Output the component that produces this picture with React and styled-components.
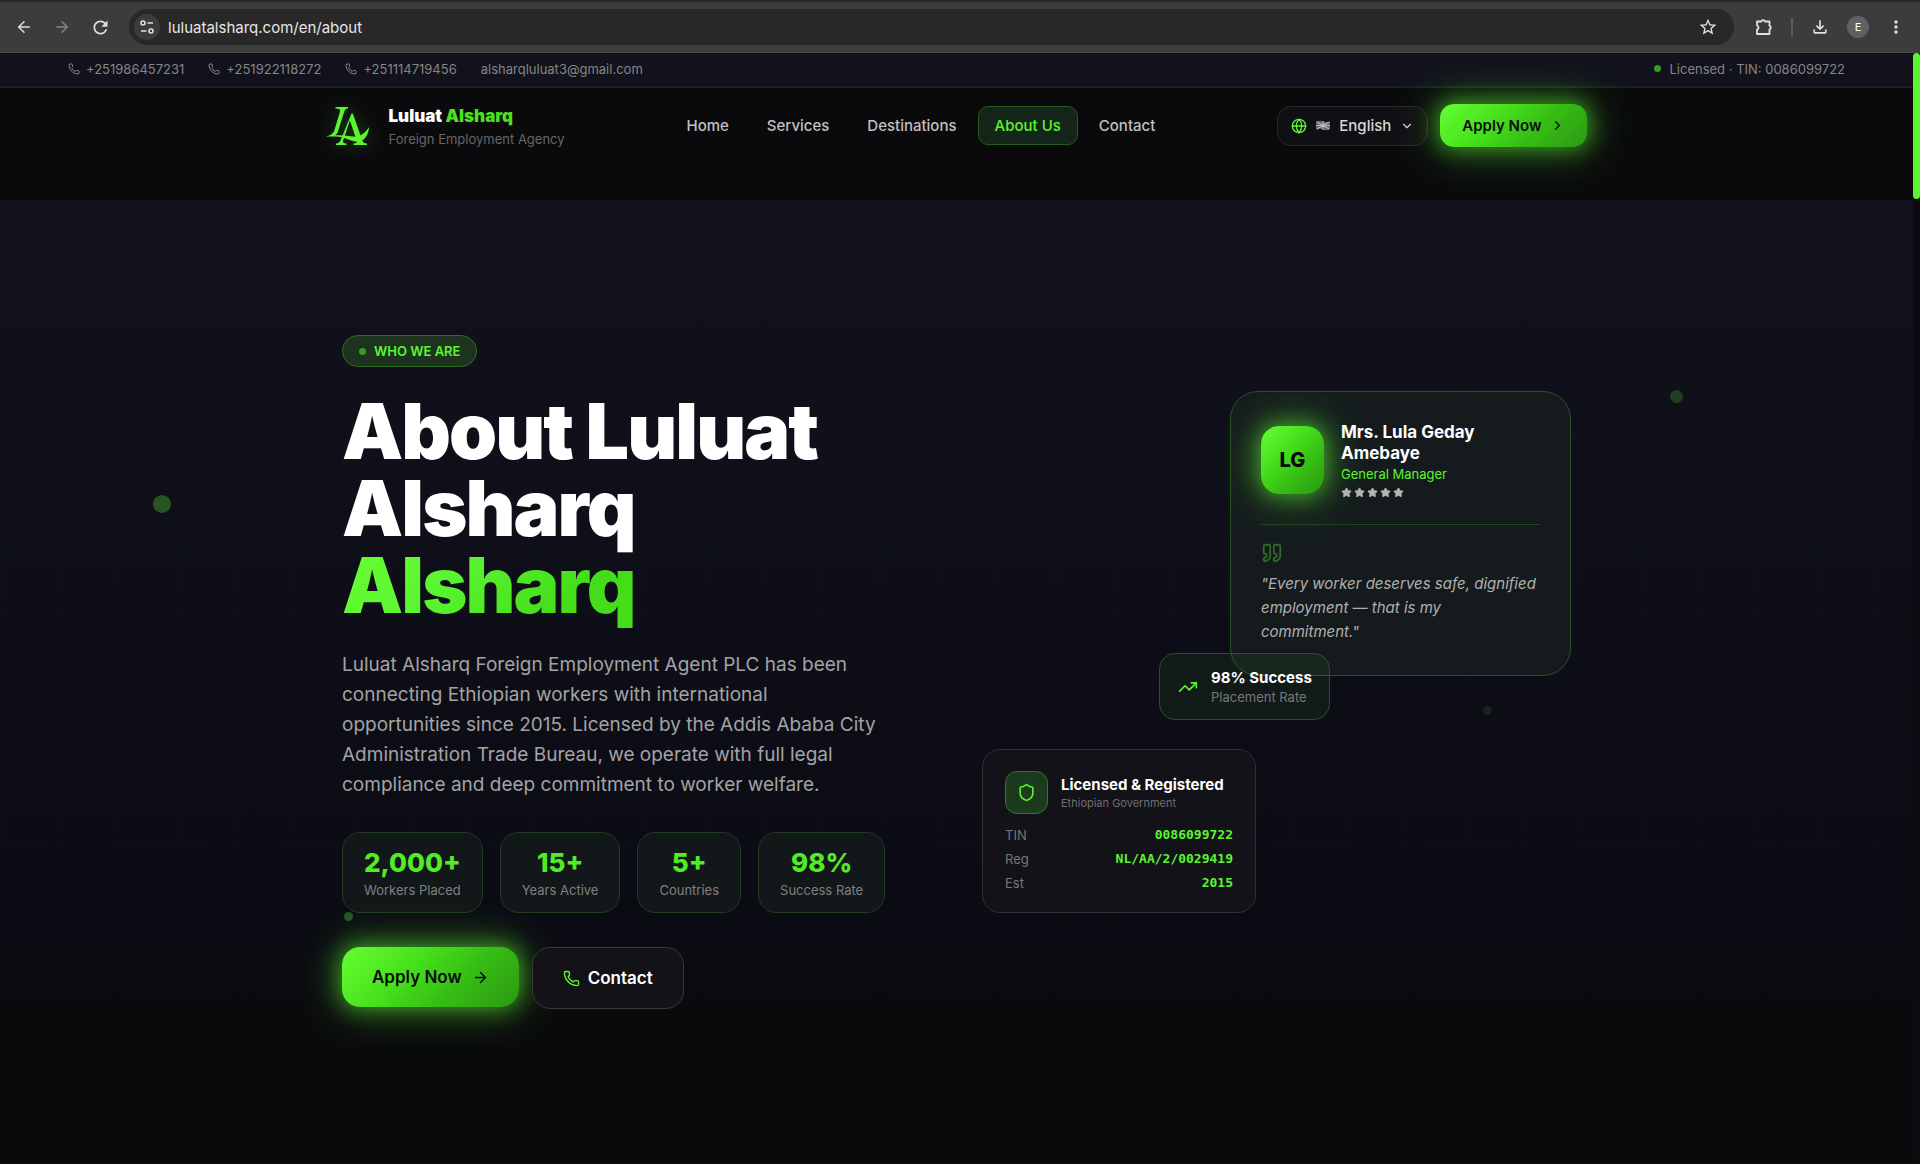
import React from 'react';
import styled, { createGlobalStyle, css } from 'styled-components';
import {
	ArrowLeft,
	ArrowRight,
	ChevronDown,
	ChevronRight,
	Globe,
	Phone,
	Quote,
	Shield,
	Star,
	TrendingUp,
} from 'lucide-react';
import {
	MdMoreVert,
	MdOutlineExtension,
	MdOutlineFileDownload,
	MdRefresh,
	MdStarBorder,
} from 'react-icons/md';

const GREEN = '#5cf531';
const GRADIENT = 'linear-gradient(135deg, #66ff33 0%, #44dd1a 40%, #36bd14 65%, #2c9912 100%)';
const GLOW = '0 0 20px 2px rgba(92, 245, 49, 0.5), 0 0 40px 8px rgba(92, 245, 49, 0.3)';

const phones = ['+251986457231', '+251922118272', '+251114719456'];

const links = [
	{ label: 'Home', href: '/en' },
	{ label: 'Services', href: '/en/services' },
	{ label: 'Destinations', href: '/en/destinations' },
	{ label: 'About Us', href: '/en/about', active: true },
	{ label: 'Contact', href: '/en/contact' },
];

const stats = [
	{ value: '2,000+', label: 'Workers Placed' },
	{ value: '15+', label: 'Years Active' },
	{ value: '5+', label: 'Countries' },
	{ value: '98%', label: 'Success Rate' },
];

const registration = [
	{ label: 'TIN', value: '0086099722' },
	{ label: 'Reg', value: 'NL/AA/2/0029419' },
	{ label: 'Est', value: '2015' },
];

const Browser = () => (
	<Toolbar>
		<ToolButton aria-label="Back"><ArrowLeft size={18} /></ToolButton>
		<ToolButton aria-label="Forward" $dim><ArrowRight size={18} /></ToolButton>
		<ToolButton aria-label="Reload"><MdRefresh size={21} /></ToolButton>
		<AddressBar>
			<SiteInfo aria-label="Site information">
				<svg width="16" height="16" viewBox="0 0 16 16" fill="none" stroke="currentColor" strokeWidth="1.6">
					<circle cx="4" cy="4" r="2" />
					<path d="M8.5 4H14M2 12h5.5" />
					<circle cx="12" cy="12" r="2" />
				</svg>
			</SiteInfo>
			<Address aria-label="Address" defaultValue="luluatalsharq.com/en/about" />
			<ToolButton aria-label="Bookmark"><MdStarBorder size={20} /></ToolButton>
		</AddressBar>
		<ToolGroup>
			<ToolButton aria-label="Extensions">
				<svg width="20" height="20" viewBox="0 0 20 20" fill="none" stroke="currentColor" strokeWidth="1.8" strokeLinejoin="round">
					<path d="M3 4.500h4.300a1.900 1.900 0 0 1 3.600 0h4.600v4.300a1.900 1.900 0 0 1 0 3.600v4.600H3v-4.300a2.200 2.200 0 0 0 0-4.200z" />
				</svg>
			</ToolButton>
			<Separator />
			<ToolButton aria-label="Downloads"><MdOutlineFileDownload size={20} /></ToolButton>
			<Profile aria-label="Profile">E</Profile>
			<ToolButton aria-label="Menu"><MdMoreVert size={20} /></ToolButton>
		</ToolGroup>
	</Toolbar>
);

const Logo = () => (
	<LogoMark viewBox="0 0 44 40" fill={GREEN} aria-hidden="true">
		<path d="M9.5 1H22v1.4c-2.2.3-3.2 1.3-3.7 3.2L12 25.500c-.6 1.900-1.400 2.900-2.800 3.800 6 .1 12.300.3 17.800 1.200 5.900.9 11.400-2.400 16-9.500-.2 6.900-3.600 12.600-8.600 14.200-5.600 1.800-10.900-1.800-16.900-3.400-5.200-1.400-10.200-1.300-17.500-1.100 5-1.600 7.500-3.500 8.500-6.700L14 5.600c.7-2.200-.7-2.900-4.500-3.200z" />
		<path d="M25.500 7.500h1.300l9.500 27c.7 2 2 2.800 4.700 3.100V39H27.500v-1.400c3-.2 3.900-1 3.200-3.100l-6.800-19.900-6.600 19.600c-.8 2.200.2 3.100 3.200 3.400V39H10v-1.400c2.600-.4 3.800-1.300 4.600-3.400z" />
	</LogoMark>
);

const Navigation = () => (
	<Nav>
		<Brand href="/en">
			<Logo />
			<BrandText>
				<BrandName>Luluat <em>Alsharq</em></BrandName>
				<BrandSub>Foreign Employment Agency</BrandSub>
			</BrandText>
		</Brand>
		<NavLinks>
			{links.map(({ label, href, active }) => (
				<NavLink key={label} href={href} $active={active}>{label}</NavLink>
			))}
		</NavLinks>
		<NavActions>
			<Language>
				<Globe size={16} color={GREEN} />
				<svg width="14" height="11" viewBox="0 0 14 11" aria-hidden="true">
					<path fill="#66666a" d="M0 1.500q3.500-1.500 7 0t7 0v8q-3.500 1.500-7 0t-7 0z" />
					<path stroke="#b8b8b8" strokeWidth="1.200" d="M1 2l12 7M13 2l-12 7M7 1v9M0 5.500h14" />
				</svg>
				English
				<ChevronDown size={14} />
			</Language>
			<ApplyLink href="/en/apply">
				Apply Now <ChevronRight size={15} />
			</ApplyLink>
		</NavActions>
	</Nav>
);

const ManagerCard = () => (
	<Manager>
		<ManagerHead>
			<Avatar>LG</Avatar>
			<div>
				<ManagerName>Mrs. Lula Geday Amebaye</ManagerName>
				<Role>General Manager</Role>
				<Stars>
					{[1, 2, 3, 4, 5].map(star => (
						<Star key={star} size={11} fill="currentColor" />
					))}
				</Stars>
			</div>
		</ManagerHead>
		<QuoteIcon size={22} />
		<QuoteText>"Every worker deserves safe, dignified employment — that is my commitment."</QuoteText>
	</Manager>
);

const LicenseCard = () => (
	<License>
		<LicenseHead>
			<ShieldBox><Shield size={19} /></ShieldBox>
			<div>
				<CardTitle>Licensed &amp; Registered</CardTitle>
				<CardNote>Ethiopian Government</CardNote>
			</div>
		</LicenseHead>
		<Registration>
			<tbody>
				{registration.map(({ label, value }) => (
					<tr key={label}>
						<th scope="row">{label}</th>
						<td>{value}</td>
					</tr>
				))}
			</tbody>
		</Registration>
	</License>
);

const App = () => (
	<>
		<GlobalStyle />
		<Browser />
		<Page>
			<TopBar>
				<Contacts>
					{phones.map(phone => (
						<TopLink key={phone} href={`tel:${phone}`}>
							<Phone size={12} /> {phone}
						</TopLink>
					))}
					<TopLink href="mailto:alsharqluluat3@gmail.com">alsharqluluat3@gmail.com</TopLink>
				</Contacts>
				<LicenseNote><Bullet /> Licensed · TIN: 0086099722</LicenseNote>
			</TopBar>
			<Header><Navigation /></Header>
			<Hero>
				<Dot $x="8%" $y="295px" $size={18} />
				<Dot $x="87.3%" $y="190px" $size={13} $dim />
				<Dot $x="77.5%" $y="506px" $size={9} $faint />
				<Dot $x="18%" $y="712px" $size={9} />
				<HeroInner>
					<Intro>
						<Pill><Bullet /> WHO WE ARE</Pill>
						<Title>
							About Luluat Alsharq
							<em>Alsharq</em>
						</Title>
						<Lead>
							Luluat Alsharq Foreign Employment Agent PLC has been connecting
							Ethiopian workers with international opportunities since 2015.
							Licensed by the Addis Ababa City Administration Trade Bureau, we
							operate with full legal compliance and deep commitment to worker
							welfare.
						</Lead>
						<Stats>
							{stats.map(({ value, label }) => (
								<Stat key={label}>
									<strong>{value}</strong>
									<span>{label}</span>
								</Stat>
							))}
						</Stats>
						<Actions>
							<ApplyLink href="/en/apply" $large>
								Apply Now <ArrowRight size={17} />
							</ApplyLink>
							<ContactLink href="/en/contact">
								<Phone size={17} color={GREEN} /> Contact
							</ContactLink>
						</Actions>
					</Intro>
					<Cards>
						<ManagerCard />
						<Success>
							<TrendingUp size={20} color={GREEN} />
							<div>
								<CardTitle>98% Success</CardTitle>
								<SuccessNote>Placement Rate</SuccessNote>
							</div>
						</Success>
						<LicenseCard />
					</Cards>
				</HeroInner>
			</Hero>
			<ScrollTrack><ScrollThumb /></ScrollTrack>
		</Page>
	</>
);

export default App;

const GlobalStyle = createGlobalStyle`
	* {
		box-sizing: border-box;
	}

	body {
		margin: 0;
		background: #0a0a0d;
		color: white;
		font-family: Inter, sans-serif;
	}

	#root {
		min-height: 100vh;
		display: flex;
		flex-direction: column;
	}

	a {
		color: inherit;
		text-decoration: none;
	}

	button {
		border: 0;
		padding: 0;
		color: inherit;
		font-family: inherit;
	}

	em {
		font-style: normal;
	}

	svg {
		flex-shrink: 0;
	}
`;

const Toolbar = styled.div`
	height: 53px;
	display: flex;
	align-items: center;
	gap: 14px;
	padding: 0 12px;
	background: #3c3c3c;
	border-top: 2px solid #1f2b26;
	border-bottom: 1px solid #4a4a4a;
`;

const ToolButton = styled.button`
	width: 24px;
	height: 24px;
	display: flex;
	align-items: center;
	justify-content: center;
	background: none;
	color: ${props => (props.$dim ? '#858585' : '#e0e0e0')};
`;

const AddressBar = styled.div`
	flex: 1;
	height: 36px;
	display: flex;
	align-items: center;
	gap: 8px;
	margin-left: 3px;
	padding: 0 14px 0 5px;
	border-radius: 18px;
	background: #282828;
`;

const SiteInfo = styled.button`
	width: 26px;
	height: 26px;
	display: flex;
	align-items: center;
	justify-content: center;
	border-radius: 13px;
	background: #3c3c3c;
	color: #e0e0e0;
`;

const Address = styled.input`
	flex: 1;
	border: 0;
	outline: none;
	padding: 0;
	background: none;
	color: #e6e6e6;
	font: 400 15px Inter, sans-serif;
`;

const ToolGroup = styled.div`
	display: flex;
	align-items: center;
	gap: 15px;
	margin-left: 4px;
`;

const Separator = styled.span`
	width: 2px;
	height: 18px;
	background: #5c5c5c;
`;

const Profile = styled.button`
	width: 22px;
	height: 22px;
	border-radius: 50%;
	background: #5f6064;
	font-size: 11px;
`;

const Page = styled.div`
	flex: 1;
	position: relative;
	display: flex;
	flex-direction: column;
	padding-right: 7px;
`;

const TopBar = styled.div`
	height: 35px;
	display: flex;
	align-items: center;
	justify-content: space-between;
	padding: 0 68px 2px;
	background: #12121c;
	border-bottom: 2px solid #19231f;
	color: #858585;
	font-size: 13px;
`;

const Contacts = styled.div`
	display: flex;
	gap: 24px;
`;

const TopLink = styled.a`
	display: flex;
	align-items: center;
	gap: 6px;
`;

const LicenseNote = styled.span`
	display: flex;
	align-items: center;
	gap: 8px;
`;

const Bullet = styled.span`
	width: 7px;
	height: 7px;
	border-radius: 50%;
	background: #33a01a;
`;

const Header = styled.header`
	height: 112px;
	padding: 13px 32px 0;
	background: #0a0a0d;
	z-index: 1;
`;

const Nav = styled.nav`
	max-width: 1262px;
	display: flex;
	align-items: center;
	justify-content: space-between;
	margin: 0 auto;
`;

const Brand = styled.a`
	display: flex;
	align-items: center;
	gap: 19px;
`;

const BrandText = styled.span`
	padding-top: 3px;
`;

const LogoMark = styled.svg`
	width: 44px;
	height: 40px;
	filter: drop-shadow(0 0 10px rgba(92, 245, 49, 0.3));
`;

const BrandName = styled.span`
	display: block;
	font-size: 17px;
	font-weight: 900;
	line-height: 24px;

	em {
		color: #4ae01f;
	}
`;

const BrandSub = styled.span`
	display: block;
	color: #666;
	font-size: 13px;
	line-height: 22px;
`;

const NavLinks = styled.div`
	display: flex;
	gap: 4px;
`;

const NavLink = styled.a`
	padding: 0 16px;
	border: 1px solid transparent;
	border-radius: 10px;
	color: #c0c0c0;
	font-size: 15px;
	font-weight: 500;
	line-height: 37px;

	${props => props.$active && css`
		border-color: #225a1c;
		background: #14251a;
		color: ${GREEN};
	`}
`;

const NavActions = styled.div`
	display: flex;
	align-items: center;
	gap: 12px;
`;

const Language = styled.button`
	height: 40px;
	display: flex;
	align-items: center;
	gap: 9px;
	padding: 0 13px;
	border: 1px solid #29292c;
	border-radius: 14px;
	background: #101014;
	color: #d6d6d6;
	font-size: 15px;
	font-weight: 500;
`;

const ApplyLink = styled.a`
	height: ${props => (props.$large ? 60 : 43)}px;
	display: flex;
	align-items: center;
	gap: ${props => (props.$large ? 10 : 9)}px;
	padding: 0 ${props => (props.$large ? 30 : 22)}px;
	border-radius: ${props => (props.$large ? 18 : 14)}px;
	background: ${GRADIENT};
	box-shadow: ${GLOW};
	color: #0a0a0d;
	font-size: ${props => (props.$large ? 17 : 15)}px;
	font-weight: 600;
`;

const Hero = styled.main`
	flex: 1;
	position: relative;
	padding: 135px 32px 0;
	background: linear-gradient(#12121d 0, #0b0b14 720px, #0a0a0d 820px);

	/* faint grid that fades out at the top and bottom */
	&::before {
		content: '';
		position: absolute;
		inset: 0;
		background:
			linear-gradient(rgba(92, 245, 49, 0.02) 1px, transparent 1px) 0 0 / 3.055vw 3.055vw,
			linear-gradient(90deg, rgba(92, 245, 49, 0.02) 1px, transparent 1px) 0 0 / 3.055vw 3.055vw;
		mask-image: linear-gradient(transparent, black 30%, black 70%, transparent 96%);
	}
`;

const Dot = styled.span`
	position: absolute;
	left: ${props => props.$x};
	top: ${props => props.$y};
	width: ${props => props.$size}px;
	height: ${props => props.$size}px;
	border-radius: 50%;
	background: #285423;

	${props => props.$dim && css`background: #213d22;`}
	${props => props.$faint && css`background: #1a241f;`}
`;

const HeroInner = styled.div`
	position: relative;
	max-width: 1229px;
	display: grid;
	grid-template-columns: 544px 1fr;
	justify-content: space-between;
	gap: 96px;
	margin: 0 auto;
`;

const Intro = styled.section`
	display: flex;
	flex-direction: column;
	align-items: flex-start;
`;

const Pill = styled.span`
	height: 32px;
	display: flex;
	align-items: center;
	gap: 8px;
	padding: 0 16px;
	border: 1px solid #2a6d20;
	border-radius: 16px;
	background: #1d3320;
	color: ${GREEN};
	font-size: 13px;
	font-weight: 600;
`;

const Title = styled.h1`
	margin: 26px 0 22px;
	font-size: 77px;
	font-weight: 900;
	letter-spacing: -0.025em;
	line-height: 77px;

	em {
		display: table;
		padding-bottom: 4px;
		background: linear-gradient(135deg, #66ff33 0%, #5cf531 35%, #44dd1a 75%);
		background-clip: text;
		color: transparent;
	}
`;

const Lead = styled.p`
	margin: 0;
	color: #a3a3a3;
	font-size: 19px;
	line-height: 30px;
`;

const Stats = styled.div`
	display: flex;
	gap: 17px;
	margin-top: 32px;
`;

const Stat = styled.div`
	height: 81px;
	flex-shrink: 0;
	padding: 14px 21px;
	border: 1px solid #203b21;
	border-radius: 18px;
	background: #121719;
	text-align: center;
	white-space: nowrap;

	strong {
		display: block;
		color: #52ec27;
		font-size: 26px;
		font-weight: 800;
		line-height: 32px;
	}

	span {
		color: #808080;
		font-size: 13px;
		line-height: 22px;
	}
`;

const Actions = styled.div`
	display: flex;
	gap: 13px;
	margin-top: 34px;
`;

const ContactLink = styled.a`
	height: 62px;
	display: flex;
	align-items: center;
	gap: 8px;
	padding: 0 30px;
	border: 1px solid #38383a;
	border-radius: 18px;
	background: #121217;
	font-size: 17px;
	font-weight: 600;
`;

/* the cards overlap each other */
const Cards = styled.section`
	position: relative;
	min-height: 580px;
`;

const Manager = styled.article`
	position: absolute;
	top: 56px;
	right: 0;
	width: 341px;
	height: 285px;
	padding: 30px;
	border: 1px solid #275422;
	border-radius: 28px;
	background: #151b1d;
`;

const ManagerHead = styled.div`
	display: flex;
	align-items: center;
	gap: 17px;
	padding-bottom: 26px;
	border-bottom: 1px solid #204720;
`;

const Avatar = styled.div`
	width: 63px;
	height: 68px;
	flex-shrink: 0;
	border-radius: 18px;
	background: ${GRADIENT};
	box-shadow: ${GLOW};
	color: #0a0a0d;
	font-size: 20px;
	font-weight: 800;
	line-height: 68px;
	text-align: center;
`;

const ManagerName = styled.div`
	font-size: 17px;
	font-weight: 700;
	line-height: 21px;
`;

const Role = styled.div`
	color: ${GREEN};
	font-size: 13px;
	line-height: 21px;
`;

const Stars = styled.div`
	display: flex;
	gap: 2px;
	padding-top: 2px;
	color: #b5b5b0;
`;

const QuoteIcon = styled(Quote)`
	display: block;
	margin-top: 17px;
	color: #2c6b26;
`;

const QuoteText = styled.p`
	margin: 8px 0 0;
	color: #b0b0b0;
	font-size: 15px;
	font-style: italic;
	line-height: 24px;
`;

const Success = styled.article`
	position: absolute;
	top: 318px;
	left: 177px;
	width: 171px;
	height: 67px;
	display: flex;
	align-items: center;
	gap: 13px;
	padding: 0 18px;
	border: 1px solid #275422;
	border-radius: 16px;
	background: rgba(92, 245, 49, 0.06);
`;

const CardTitle = styled.div`
	font-size: 15px;
	font-weight: 700;
	line-height: 20px;
	white-space: nowrap;
`;

const SuccessNote = styled.div`
	color: #777;
	font-size: 13px;
	line-height: 18px;
	white-space: nowrap;
`;

const License = styled.article`
	position: absolute;
	top: 414px;
	left: 0;
	width: 274px;
	height: 164px;
	padding: 21px 22px;
	border: 1px solid #303034;
	border-radius: 18px;
	background: #121218;
`;

const LicenseHead = styled.div`
	display: flex;
	align-items: center;
	gap: 13px;
`;

const ShieldBox = styled.div`
	width: 43px;
	height: 43px;
	display: flex;
	align-items: center;
	justify-content: center;
	border: 1px solid #2c7a20;
	border-radius: 12px;
	background: #1c3a1d;
	color: ${GREEN};
`;

const CardNote = styled.div`
	color: #707070;
	font-size: 11px;
	line-height: 16px;
`;

const Registration = styled.table`
	width: 100%;
	margin-top: 9px;
	border-collapse: collapse;
	font-size: 13px;
	line-height: 24px;

	th {
		padding: 0;
		color: #777;
		font-weight: 400;
		text-align: left;
	}

	td {
		padding: 0;
		color: ${GREEN};
		font-family: 'DejaVu Sans Mono', monospace;
		font-weight: 700;
		text-align: right;
	}
`;

/* always visible, lies over the right edge of the page */
const ScrollTrack = styled.div`
	position: absolute;
	top: 0;
	right: 0;
	bottom: 0;
	width: 7px;
	background: #0b0b10;
`;

const ScrollThumb = styled.div`
	height: 146px;
	border-radius: 4px;
	background: ${GREEN};
`;
